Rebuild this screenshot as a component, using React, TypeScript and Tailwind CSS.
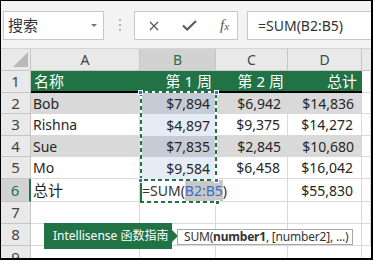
import React from 'react'

const green = '#217346'

interface DataRow {
  n: number
  name: string
  b: string
  c: string
  d: string
  shade: boolean
}

const dataRows: DataRow[] = [
  { n: 2, name: 'Bob', b: '$7,894', c: '$6,942', d: '$14,836', shade: true },
  { n: 3, name: 'Rishna', b: '$4,897', c: '$9,375', d: '$14,272', shade: false },
  { n: 4, name: 'Sue', b: '$7,835', c: '$2,845', d: '$10,680', shade: true },
  { n: 5, name: 'Mo', b: '$9,584', c: '$6,458', d: '$16,042', shade: false },
]

function RowHead({ n, active }: { n: number | string; active?: boolean }) {
  return (
    <div
      className={`flex items-center justify-center border-b border-r border-[#c6c6c6] text-[15px] ${
        active ? 'bg-[#d2d2d2] text-[#217346] border-r-2 border-r-[#217346]' : 'bg-[#e9e9e9] text-[#444]'
      }`}
    >
      {n}
    </div>
  )
}

function Blank() {
  return <div className="border-b border-r border-[#d9d9d9]" />
}

function CrossIcon() {
  return (
    <svg width="10" height="10" viewBox="0 0 10 10">
      <path d="M1 1 L9 9 M9 1 L1 9" stroke="#5c5c5c" strokeWidth="1.4" fill="none" />
    </svg>
  )
}

function CheckIcon() {
  return (
    <svg width="15" height="11" viewBox="0 0 15 11">
      <path d="M1 5.5 L5.2 9.5 L14 1" stroke="#5c5c5c" strokeWidth="2.2" fill="none" />
    </svg>
  )
}

export default function App() {
  return (
    <div className="relative w-[373px] h-[260px] overflow-hidden border-l border-t border-r-2 border-b-2 border-black bg-white font-[family-name:Noto_Sans,Noto_Sans_CJK_SC,sans-serif] text-[#262626]">
      {/* formula bar */}
      <div className="flex h-[48px] items-start bg-[#f3f3f3] pt-[10px] border-b border-[#d4d4d4]">
        <div className="ml-[2px] flex h-[29px] w-[101px] items-center justify-between border border-[#c8c8c8] bg-white pl-[4px] pr-[6px] text-[15px] text-[#333]">
          <span>搜索</span>
          <span className="h-0 w-0 border-x-[3px] border-t-[3px] border-x-transparent border-t-[#777]" />
        </div>
        <div className="ml-[14px] mt-[8px] flex w-[3px] flex-col items-center gap-[3px]">
          <span className="h-[2px] w-[2px] bg-[#b5b5b5]" />
          <span className="h-[2px] w-[2px] bg-[#b5b5b5]" />
          <span className="h-[2px] w-[2px] bg-[#b5b5b5]" />
        </div>
        <div className="ml-[13px] flex h-[29px] w-[104px] items-center border border-[#c8c8c8] bg-white">
          <span className="ml-[14px] flex"><CrossIcon /></span>
          <span className="ml-[23px] flex"><CheckIcon /></span>
          <span className="ml-[23px] font-[family-name:Liberation_Serif,serif] italic text-[15px] text-[#555]">
            f<span className="text-[11px]">x</span>
          </span>
        </div>
        <div className="ml-[9px] flex h-[29px] flex-1 items-center border border-r-0 border-[#c8c8c8] bg-white pl-[10px] text-[14px] text-[#333]">
          =SUM(B2:B5)
        </div>
      </div>

      {/* sheet */}
      <div className="grid grid-cols-[30px_109px_76px_72px_74px_9px] grid-rows-[22px_22px_21px_22px_21px_22px_23px_22px_22px_12px] text-[14px]">
        {/* column headers */}
        <div className="flex items-end justify-end border-b border-r border-[#c6c6c6] bg-[#e9e9e9] pb-[3px] pr-[2px]">
          <svg width="15" height="15" viewBox="0 0 15 15">
            <polygon points="15,0 15,15 0,15" fill="#b9b9b9" />
          </svg>
        </div>
        <div className="flex items-center justify-center border-b border-r border-[#c6c6c6] bg-[#e9e9e9] text-[#444]">A</div>
        <div className="flex items-center justify-center border-b border-r border-[#c6c6c6] bg-[#d2d2d2] text-[#217346]">B</div>
        <div className="flex items-center justify-center border-b border-r border-[#c6c6c6] bg-[#e9e9e9] text-[#444]">C</div>
        <div className="flex items-center justify-center border-b border-r border-[#c6c6c6] bg-[#e9e9e9] text-[#444]">D</div>
        <div className="border-b border-[#c6c6c6] bg-[#e9e9e9]" />

        {/* row 1 */}
        <RowHead n={1} />
        <div className="flex items-center border-b-2 border-black bg-[#217346] pl-[3px] text-[15px] text-white">名称</div>
        <div className="flex items-center justify-end border-b-2 border-black bg-[#217346] pr-[4px] text-[15px] text-white">第 1 周</div>
        <div className="flex items-center justify-end border-b-2 border-black bg-[#217346] pr-[4px] text-[15px] text-white">第 2 周</div>
        <div className="flex items-center justify-end border-b-2 border-black bg-[#217346] pr-[5px] text-[15px] text-white">总计</div>
        <Blank />

        {dataRows.map((r) => (
          <React.Fragment key={r.n}>
            <RowHead n={r.n} />
            <div className={`flex items-center pl-[2px] ${r.shade ? 'bg-[#d9d9d9]' : 'border-b border-r border-[#d9d9d9]'}`}>
              {r.name}
            </div>
            <div className={`flex items-center justify-end pr-[6px] ${r.shade ? 'bg-[#c6ccd5]' : 'bg-[#e6ecf6]'}`}>{r.b}</div>
            <div className={`flex items-center justify-end pr-[7px] ${r.shade ? 'bg-[#d9d9d9]' : 'border-b border-r border-[#d9d9d9]'}`}>
              {r.c}
            </div>
            <div className={`flex items-center justify-end pr-[8px] ${r.shade ? 'bg-[#d9d9d9]' : 'border-b border-r border-[#d9d9d9]'}`}>
              {r.d}
            </div>
            <Blank />
          </React.Fragment>
        ))}

        {/* row 6 */}
        <RowHead n={6} active />
        <div className="flex items-center border-b border-r border-[#d9d9d9] pl-[2px] text-[15px]">总计</div>
        <div className="flex items-center whitespace-nowrap pl-[2px] text-[#333]">
          =SUM(
          <span className="bg-[#c8c8c8] text-[#3d6fc7]">B2:B5</span>
          <span className="h-[16px] w-px bg-black" />)
        </div>
        <div className="border-b border-r border-[#d9d9d9]" />
        <div className="flex items-center justify-end border-b border-r border-[#d9d9d9] pr-[8px]">$55,830</div>
        <Blank />

        {/* rows 7-9 */}
        {[7, 8].map((n) => (
          <React.Fragment key={n}>
            <RowHead n={n} />
            <Blank />
            <Blank />
            <Blank />
            <Blank />
            <Blank />
          </React.Fragment>
        ))}
        <div className="flex justify-center overflow-hidden border-r border-[#c6c6c6] bg-[#e9e9e9] pt-[4px] text-[15px] leading-[15px] text-[#444]">9</div>
        <div className="border-r border-[#d9d9d9]" />
        <div className="border-r border-[#d9d9d9]" />
        <div className="border-r border-[#d9d9d9]" />
        <div className="border-r border-[#d9d9d9]" />
        <div />
      </div>

      {/* reference marquee B2:B5 */}
      <svg className="absolute left-[139px] top-[90px]" width="77" height="90" viewBox="0 0 77 90">
        <rect x="1" y="1" width="75" height="88" fill="none" stroke="#fff" strokeWidth="2" />
        <rect x="1" y="1" width="75" height="88" fill="none" stroke={green} strokeWidth="2" strokeDasharray="4 3" />
      </svg>
      {/* edited cell B6 */}
      <svg className="absolute left-[139px] top-[178px]" width="79" height="24" viewBox="0 0 79 24">
        <line x1="1" y1="0" x2="1" y2="24" stroke={green} strokeWidth="2" />
        <line x1="0" y1="23" x2="77" y2="23" stroke="#fff" strokeWidth="2" />
        <line x1="0" y1="23" x2="77" y2="23" stroke={green} strokeWidth="2" strokeDasharray="4 3" />
      </svg>
      <span className="absolute left-[137px] top-[89px] h-[5px] w-[5px] border border-white bg-[#3b6fd0]" />
      <span className="absolute left-[213px] top-[89px] h-[5px] w-[5px] border border-white bg-[#3b6fd0]" />
      <span className="absolute left-[137px] top-[177px] h-[5px] w-[5px] border border-white bg-[#3b6fd0]" />
      <span className="absolute left-[213px] top-[177px] h-[5px] w-[5px] border border-white bg-[#3b6fd0]" />
      <span className="absolute left-[214px] top-[199px] h-[5px] w-[5px] border border-white bg-[#217346]" />

      {/* intellisense callout */}
      <div className="absolute left-[43px] top-[222px] flex h-[26px] w-[128px] items-center whitespace-nowrap bg-[#217346] pl-[9px] text-[12px] text-white">
        Intellisense 函数指南
      </div>
      <span className="absolute left-[171px] top-[229px] h-0 w-0 border-y-[6px] border-l-[6px] border-y-transparent border-l-[#217346]" />
      <div className="absolute left-[176px] top-[228px] flex h-[16px] w-[176px] items-center overflow-hidden whitespace-nowrap border border-[#a9a9a9] bg-white pl-[6px] text-[12px] leading-none tracking-[-0.2px] text-[#333]">
        SUM(<b>number1</b>, [number2], ...)
      </div>
    </div>
  )
}
